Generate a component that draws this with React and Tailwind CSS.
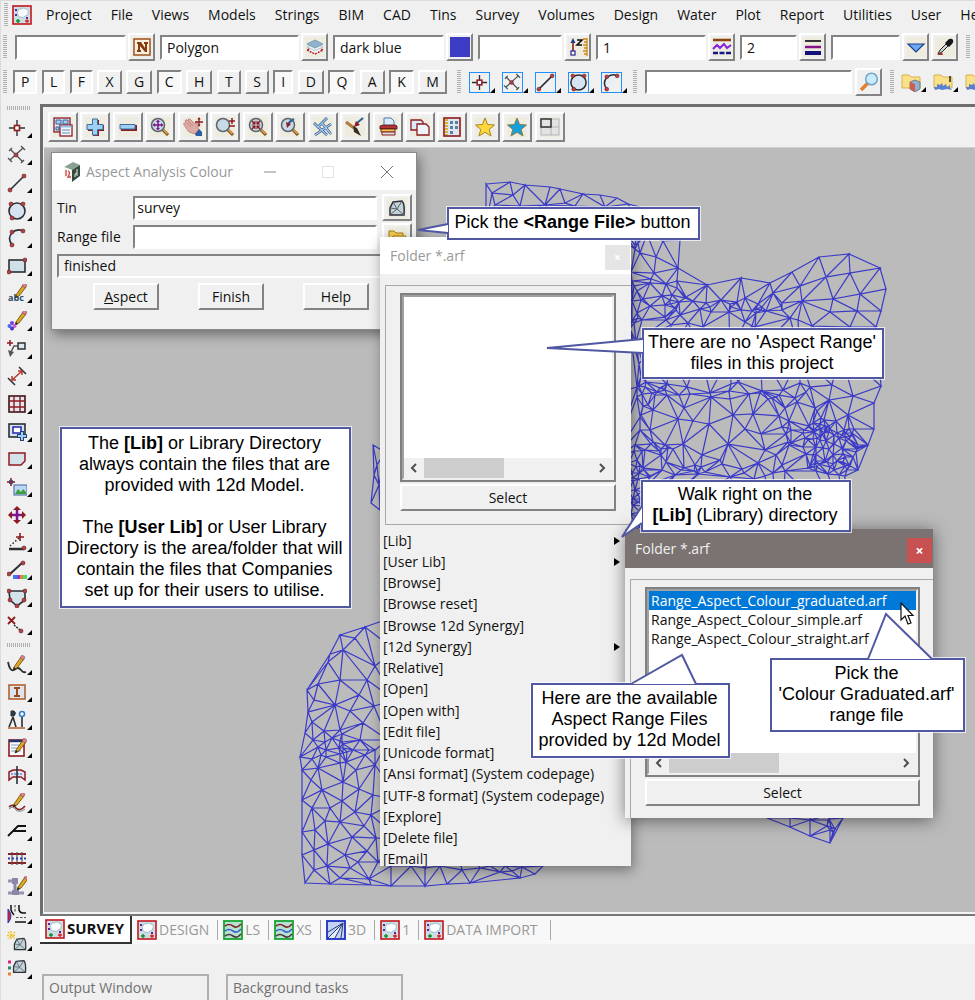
import { useMemo, useState } from 'react';
import clsx from 'clsx';

const RAISED = 'border-2 border-t-white border-l-white border-r-[#838383] border-b-[#838383] bg-[#f0f0f0]';
const SUNKEN = 'border-2 border-t-[#838383] border-l-[#838383] border-r-white border-b-white bg-white';

const MENUS = ['Project', 'File', 'Views', 'Models', 'Strings', 'BIM', 'CAD', 'Tins', 'Survey', 'Volumes', 'Design', 'Water', 'Plot', 'Report', 'Utilities', 'User', 'Help'];

// All icons are drawn on a 20x20 grid
const RED = '#8e1b1f';
const INK = '#2b2f36';

const pencil = (
  <>
    <path d="M7 12 L14 2 L17 4 L10 13 L6 15 Z" fill="#e0a81c" stroke="#5c4410" strokeWidth=".8" />
    <path d="M13 3 L15 0 L18 2 L16.500 5 Z" fill="#d9808a" stroke="#8a4a50" strokeWidth=".6" />
    <path d="M6 15 L7 12 L9 14 Z" fill="#222" />
  </>
);
const lens = (
  <>
    <path d="M12 12 L18 18" stroke="#7a4a12" strokeWidth="3" />
    <path d="M12.500 12 L17.500 17" stroke="#e7a44b" strokeWidth="1.500" />
    <circle cx="8" cy="8" r="6.500" fill="#c7dbe6" stroke="#5b656d" strokeWidth="1.500" />
  </>
);
const tinShape = (
  <>
    <path d="M6 4 L15 3 Q18 6 17 17 L3 17 L3 10 Z" fill="#c3d3da" stroke={INK} strokeWidth="1.500" />
    <path d="M6 4 L10 11 L3 17 M15 3 L10 11 L17 17 M3 10 L10 11" stroke="#58636a" fill="none" />
  </>
);
const folder = <path d="M1 3 H8 L10 5 H19 V16 H1 Z" fill="#fbe08a" stroke="#d9b24a" />;
const planTile = (
  <>
    <rect x="1" y="1" width="18" height="18" fill="#c9dfe4" stroke="#c4161c" strokeWidth="1.600" />
    <path d="M6 6 Q6 3 9 4 Q12 2 14 4 Q18 5 16 8 Q16 11 13 11 Q11 14 9 12 Q5 12 6 9 Q4 7 6 6" fill="#fbfdfe" stroke="#8fb2c0" strokeWidth=".8" />
    <path d="M3 4 h2 v2 h-2 z M3 9 h2 v2 h-2 z M14 12 h2 v2 h-2 z" fill="#6a1f9a" />
    <path d="M6 14 v4 M4 16 h4" stroke="#138a2e" strokeWidth="1.400" />
    <path d="M15 14.500 v3.500 M13 16 h4" stroke="#e01c24" strokeWidth="1.400" />
  </>
);
const waveTile = (
  <>
    <rect x="1" y="1" width="18" height="18" fill="#b9e0d4" stroke="#17a52e" strokeWidth="1.800" />
    <path d="M2 6 Q6 3 10 6 T18 4" stroke="#7d2b2b" strokeWidth="1.600" fill="none" />
    <path d="M2 11 Q6 8 10 11 T18 9" stroke="#3c63c9" strokeWidth="1.600" fill="none" />
    <path d="M2 16 Q6 13 10 16 T18 14" stroke="#4c3a3a" strokeWidth="1.600" fill="none" />
  </>
);
const dot = (x, y) => <circle cx={x} cy={y} r="2" fill="#b04348" stroke="#6e1a1e" strokeWidth=".6" />;

const ICONS = {
  plan: planTile,
  section: waveTile,
  perspective: (
    <>
      <rect x="1" y="1" width="18" height="18" fill="#c5d2f7" stroke="#1d2fc0" strokeWidth="1.800" />
      <path d="M2 18 L17 3 L8 18 Z" fill="#e6eefb" />
      <path d="M2 18 L17 3 M9 18 L17 3 M15 18 L17 3 M2 12 L17 3" stroke="#26406b" fill="none" />
    </>
  ),
  name: (
    <>
      <rect x="2" y="2" width="16" height="16" fill="#f8efe0" stroke="#a0501c" strokeWidth="1.500" />
      <path d="M5 5 h4 l4 6 V7 h-1 V5 h4 v2 h-1 v8 h-2 L8 9 v4 h1 v2 H5 v-2 h1 V7 H5 Z" fill="#8a3a0c" />
    </>
  ),
  layers: (
    <>
      <path d="M2 13 L10 17 L18 13 L10 9 Z" fill="#fff" stroke="#b0202a" strokeDasharray="2 1" strokeWidth="1.500" />
      <path d="M2 10 L10 14 L18 10 L10 6 Z" fill="#e4edf2" stroke="#b9c6cf" />
      <path d="M2 7 L10 11 L18 7 L10 3 Z" fill="#8fb3cf" stroke="#6f91aa" strokeWidth=".8" />
    </>
  ),
  swatch: <rect width="20" height="20" fill="#3b3bc4" />,
  height: (
    <>
      <path d="M5 3 V14" stroke="#8e1b1f" strokeWidth="1.600" />
      <path d="M2.500 6 L5 1 L7.500 6 Z" fill="#253a8e" />
      <rect x="3" y="14" width="4" height="4" fill="#fff" stroke="#22229a" strokeWidth="1.200" />
      <path d="M9 3 h5 l-5 5 h5" stroke="#111" strokeWidth="1.600" fill="none" />
      <path d="M19 1 V19 M15 2 h4 M16 5 h3 M15 8 h4 M16 11 h3 M15 14 h4 M16 17 h3" stroke="#d08a1c" strokeWidth="1.300" />
    </>
  ),
  linestyle: (
    <>
      <path d="M1 3 H19" stroke="#8a4312" strokeWidth="2.500" />
      <path d="M1 12 L5 8 L8 11 L12 7 L15 11 L19 8" stroke="#8424e0" strokeWidth="2" fill="none" />
      <path d="M1 16 H19" stroke="#15158c" strokeWidth="2.500" strokeDasharray="5 1.500" />
    </>
  ),
  weight: (
    <>
      <path d="M2 4 H18" stroke="#333" strokeWidth="2" />
      <path d="M2 10 H18" stroke="#86128a" strokeWidth="2.500" />
      <path d="M2 16 H18" stroke="#12127f" strokeWidth="4" />
    </>
  ),
  drop: <path d="M2 7 H18 L10 15 Z" fill="#69aaf0" stroke="#1d3f8f" strokeWidth="1.200" />,
  dropper: (
    <>
      <path d="M3 17 L5 13 L11 7 L13 9 L7 15 Z" fill="#cfd5da" stroke="#222" />
      <path d="M10 6 L14 2 Q17 1 18 3 Q19 5 17 7 L14 10 Z" fill="#16181f" />
      <path d="M2 18 L7 15 L8 18 Z" fill="#a83338" />
    </>
  ),
  snapPoint: (
    <>
      <path d="M10 2 V18 M2 10 H18" stroke={INK} strokeWidth="1.400" />
      <rect x="7.500" y="7.500" width="5" height="5" fill="#fff" stroke={RED} strokeWidth="1.600" />
    </>
  ),
  snapCross: (
    <>
      <path d="M3 4 L16 17 M16 3 L3 15 M14 1 l4 4 M1 13 l4 4 M2 6 l3 -3 M14 18 l3 -3" stroke="#4a4e55" strokeWidth="1.300" fill="none" />
      {dot(9, 10)}
    </>
  ),
  snapLine: (
    <>
      <path d="M3 17 L17 3" stroke={INK} strokeWidth="1.600" />
      {dot(3, 17)}
      {dot(17, 3)}
    </>
  ),
  snapCircle: (
    <>
      <circle cx="10" cy="10" r="8" fill="#d5e3f2" stroke={INK} strokeWidth="1.600" />
      {dot(4, 3)}
      {dot(16, 3)}
      {dot(5, 17)}
    </>
  ),
  snapArc: (
    <>
      <path d="M5 17 Q0 10 5 5 Q10 0 16 3" stroke={INK} strokeWidth="1.600" fill="#e6eff5" />
      {dot(5, 17)}
      {dot(5, 4)}
      {dot(16, 3)}
    </>
  ),
  rect: (
    <>
      <rect x="2" y="4" width="16" height="12" fill="#cfe0e6" stroke={INK} strokeWidth="1.600" />
      {dot(2, 16)}
      {dot(18, 4)}
    </>
  ),
  text: (
    <>
      <g transform="translate(2 -1)">{pencil}</g>
      <text x="1" y="17" fontSize="9" fontWeight="700" fill="#2c4a68" fontFamily="Open Sans, sans-serif">abc</text>
    </>
  ),
  symbol: (
    <>
      <g transform="translate(2 -1)">{pencil}</g>
      <circle cx="5" cy="12" r="2" fill="#7c3ae0" />
      <circle cx="2.500" cy="15" r="2" fill="#3f6cf0" />
      <circle cx="7.500" cy="15" r="2" fill="#ca5ad0" />
      <circle cx="5" cy="17.500" r="2" fill="#4339c8" />
    </>
  ),
  leader: (
    <>
      <path d="M3 1 v6 M0 4 h6" stroke={RED} strokeWidth="1.500" />
      <rect x="11" y="4" width="7" height="6" fill="#dbe8ee" stroke={INK} strokeWidth="1.500" />
      <path d="M11 7 H7 L4 13" stroke="#555" strokeWidth="1.500" fill="none" />
      <path d="M1 11 L7 13 L3 18 Z" fill="#555" />
    </>
  ),
  dimension: (
    <>
      <path d="M1 12 L8 19 M12 1 L19 8" stroke={INK} strokeWidth="1.500" />
      <path d="M5 14 L15 5 M5 10 v4 h4 M11 5 h4 v4" stroke="#b43a32" strokeWidth="1.500" fill="none" />
    </>
  ),
  table: (
    <>
      <rect x="2" y="2" width="16" height="16" fill="#e2e9ee" stroke="#3c1418" strokeWidth="1.600" />
      <path d="M7 2 V18 M13 2 V18 M2 7 H18 M2 13 H18" stroke={RED} strokeWidth="1.400" />
    </>
  ),
  insert: (
    <>
      <rect x="2" y="2" width="16" height="13" fill="#d4e2ea" stroke={INK} strokeWidth="1.600" />
      <rect x="6" y="5" width="8" height="6" fill="#fff" stroke="#2424b4" strokeWidth="1.500" />
      <path d="M15 9 v10 M10 14 h10" stroke="#27427a" strokeWidth="4" />
      <path d="M15 10 v8 M11 14 h8" stroke="#9fd0f0" strokeWidth="2" />
    </>
  ),
  polygon: <path d="M2 4 H18 V12 L14 16 H2 Z" fill="#d4e2ea" stroke={RED} strokeWidth="1.500" />,
  image: (
    <>
      <path d="M4 1 v8 M0 5 h8" stroke={RED} strokeWidth="1.500" />
      <circle cx="4" cy="5" r="2" fill="none" stroke="#27427a" />
      <rect x="7" y="8" width="13" height="10" fill="#b8d8f4" stroke="#5d79a8" strokeWidth="1.200" />
      <path d="M8 17 L11 12 L14 15 L16 12 L19 15 V17 Z" fill="#3c9e3c" />
    </>
  ),
  move: (
    <>
      <path d="M10 3 V17 M3 10 H17" stroke="#7d168a" strokeWidth="2.500" />
      <path d="M6 5 L10 1 L14 5 Z M6 15 L10 19 L14 15 Z M5 6 L1 10 L5 14 Z M15 6 L19 10 L15 14 Z" fill={RED} />
    </>
  ),
  extend: (
    <>
      <path d="M2 17 H17" stroke={INK} strokeWidth="2.500" />
      <path d="M3 14 L12 6" stroke={INK} strokeDasharray="1.500 2" strokeWidth="1.500" />
      <path d="M13 1 v8 M9 5 h8" stroke={RED} strokeWidth="1.600" />
      {dot(17, 16)}
    </>
  ),
  colourLine: (
    <>
      <path d="M3 14 L15 3" stroke={INK} strokeWidth="2" />
      {dot(16, 3)}
      {dot(2, 14)}
      <path d="M6 17 h4" stroke="#3b76f0" strokeWidth="4" />
      <path d="M10 17 h3" stroke="#8b3bd0" strokeWidth="4" />
      <path d="M13 17 h3" stroke="#f08030" strokeWidth="4" />
      <path d="M16 17 h4" stroke="#40e070" strokeWidth="4" />
    </>
  ),
  shield: (
    <>
      <path d="M2 3 H18 V12 L10 18 L3 12 Z" fill="#d4e2ea" stroke={INK} strokeWidth="1.600" />
      {dot(2, 3)}
      {dot(18, 3)}
      {dot(10, 18)}
      {dot(3, 12)}
      {dot(17, 12)}
    </>
  ),
  remove: (
    <>
      <path d="M1 2 L8 9 M8 2 L1 9" stroke={RED} strokeWidth="1.800" />
      <path d="M7 10 L13 15" stroke={INK} strokeWidth="1.500" strokeDasharray="2 1" />
      {dot(14, 16)}
    </>
  ),
  sketch: (
    <>
      <path d="M1 7 Q3 17 7 15 Q11 11 14 15 Q16 18 19 17" stroke={INK} strokeWidth="1.800" fill="none" />
      {pencil}
    </>
  ),
  ibeam: (
    <>
      <rect x="2" y="3" width="16" height="14" fill="#d9e6ef" stroke="#b5602c" strokeWidth="1.600" />
      <path d="M7 5 h6 v2 h-2 v6 h2 v2 H7 v-2 h2 V7 H7 Z" fill="#a0481c" />
    </>
  ),
  survey: (
    <>
      <path d="M4 1 h3 q3 2 0 5 H4 Z" fill="#2c3c50" stroke={INK} />
      <path d="M6 7 L2 17 M6 7 L9 17 M15 7 V17" stroke={INK} strokeWidth="1.600" />
      <circle cx="15" cy="4" r="2.500" fill="#fff" stroke="#2f82c8" strokeWidth="1.600" />
      <path d="M1 18 H18" stroke="#b5602c" strokeWidth="1.500" />
    </>
  ),
  notes: (
    <>
      <rect x="2" y="2" width="15" height="16" fill="#fff" stroke={RED} strokeWidth="1.600" />
      <path d="M2 3 H17" stroke="#24366e" strokeWidth="2.500" />
      <path d="M4 7 h10 M4 10 h10 M4 13 h10" stroke="#7b9ad0" />
      <g transform="translate(2 0)">{pencil}</g>
    </>
  ),
  xsection: (
    <>
      <path d="M2 7 L6 5 H14 L18 7 V15 L14 12 H6 L2 15 Z" fill="#dfe7f3" stroke={RED} strokeWidth="1.500" />
      <path d="M4 9 H16" stroke="#3c5bb4" fill="none" strokeDasharray="2 1" />
      <path d="M10 1 V19" stroke={INK} strokeWidth="1.600" />
    </>
  ),
  redraw: (
    <>
      <path d="M2 14 Q6 10 9 15 Q13 19 18 13" stroke={RED} strokeWidth="1.600" fill="none" />
      <path d="M2 16 Q6 12 9 17 Q13 20 18 16" stroke="#6d8a94" fill="none" />
      <g transform="translate(0 -1)">{pencil}</g>
    </>
  ),
  slope: <path d="M1 15 L11 5 H19 M6 10 H19" stroke="#111" strokeWidth="1.800" fill="none" />,
  rail: (
    <>
      <path d="M1 6 H19 M1 15 H19" stroke={RED} strokeWidth="1.800" />
      <path d="M5 4 V17 M10 4 V17 M15 4 V17" stroke="#555" strokeWidth="1.200" />
      <path d="M1 10.500 H19" stroke="#2d3cb4" strokeWidth="1.800" strokeDasharray="2 2" />
    </>
  ),
  column: (
    <>
      <path d="M1 5 h10 M1 17 h16" stroke="#9694b2" strokeWidth="3" />
      <path d="M5 2 h6 v6 h-6 z M5 14 h7 v5 h-7 z" fill="#8a88a8" />
      <path d="M8 6 V16" stroke="#8a88a8" strokeWidth="3" />
      <g transform="translate(4 -1)">{pencil}</g>
    </>
  ),
  junction: (
    <>
      <path d="M1 5 Q7 12 1 19 Z" fill="#e01c24" stroke="#2d3cb4" />
      <path d="M4 1 V6 Q5 9 7 11 M12 1 V6 Q13 9 16 9 H19 M8 18 H19" stroke="#111" strokeWidth="1.500" fill="none" />
      <path d="M8 1 V8 M9 13.500 H19" stroke="#555" strokeWidth="1.200" strokeDasharray="2.500 1.500" />
    </>
  ),
  newTin: (
    <>
      <path d="M4 0 v9 M0 4.500 h9 M1 1 l7 7 M8 1 l-7 7" stroke="#f0c020" strokeWidth="1.300" strokeDasharray="2 1" />
      <g transform="translate(5 5) scale(.8)">{tinShape}</g>
    </>
  ),
  colourTin: (
    <>
      <path d="M1 3 h3" stroke="#e02080" strokeWidth="3" />
      <path d="M1 9 h3" stroke="#208a70" strokeWidth="3" />
      <path d="M1 15 h3" stroke="#f08030" strokeWidth="3" />
      <g transform="translate(4 -1) scale(.85)">{tinShape}</g>
    </>
  ),
  tin: tinShape,
  windows: (
    <>
      <rect x="1" y="1" width="16" height="14" fill="#d8e9f5" stroke={RED} strokeWidth="1.300" />
      <path d="M3 3 h5 v4 h-5 z M10 3 h5 v4 h-5 z M3 10 h3 v3 h-3 z" fill="#a9cbea" stroke="#3a64a0" />
      <rect x="7" y="8" width="12" height="11" fill="#f4f8fb" stroke={RED} strokeWidth="1.300" />
      <path d="M9 13 h8 M9 16 h8" stroke="#5b8cc0" />
      <path d="M7.500 9.500 h11" stroke="#8ec3ee" strokeWidth="2" />
    </>
  ),
  plus: (
    <>
      <path d="M8 3 h6 v5 h5 v6 h-5 v5 h-6 v-5 h-5 v-6 h5 z" fill={RED} />
      <path d="M7.500 2 h5 v5.500 h5.500 v5 h-5.500 v5.500 h-5 v-5.500 h-5.500 v-5 h5.500 z" fill="#9fd0f5" stroke="#3d6f9e" />
    </>
  ),
  minus: (
    <>
      <path d="M3 8 h16 v6 h-16 z" fill={RED} />
      <path d="M2 7.500 h15 v4.500 h-15 z" fill="#9fd0f5" stroke="#3d6f9e" />
    </>
  ),
  zoomFit: (
    <>
      {lens}
      <path d="M8 4 V12 M4 8 H12" stroke="#7d168a" strokeWidth="1.500" />
      <path d="M6 5 L8 2.500 L10 5 Z M6 11 L8 13.500 L10 11 Z M5 6 L2.500 8 L5 10 Z M11 6 L13.500 8 L11 10 Z" fill="#7d168a" />
    </>
  ),
  pan: (
    <>
      <path d="M1 8 Q0 6 2 6 L3 6 Q1 3 3 3 Q4 2 5 4 Q5 1 7 2 L12 7 L13 5 Q15 5 14 8 L16 13 L12 17 L6 15 Z" fill="#dfa9a6" stroke="#b8807c" strokeWidth=".8" />
      <path d="M4 6 L8 10 M5 4 L10 9" stroke="#b8807c" strokeWidth=".8" />
      <path d="M12 17 L16 12 L19 15 V19 H13 Z" fill="#2b5c9c" />
      <path d="M16 1 V9 M12 5 H20" stroke={RED} strokeWidth="1.300" />
      <path d="M14.500 2.500 L16 0 L17.500 2.500 Z M14.500 7.500 L16 10 L17.500 7.500 Z" fill={RED} />
    </>
  ),
  zoomInOut: (
    <>
      {lens}
      <path d="M17 1 v6 M14 4 h6 M14 9 h6" stroke={RED} strokeWidth="1.500" />
    </>
  ),
  zoomShrink: (
    <>
      {lens}
      <path d="M4 4 l3 3 M12 4 l-3 3 M4 12 l3 -3 M12 12 l-3 -3" stroke={RED} strokeWidth="1.500" />
      <path d="M7.500 3.500 v4 h-4 z M8.500 3.500 v4 h4 z M7.500 12.500 v-4 h-4 z M8.500 12.500 v-4 h4 z" fill={RED} />
    </>
  ),
  zoomBack: (
    <>
      {lens}
      <path d="M8 9 Q8 5 14 2" stroke="#2f5f96" strokeWidth="2" fill="none" />
      <path d="M6 5 L11 7 L7 11 Z" fill={RED} />
    </>
  ),
  ticks: (
    <>
      <path d="M1 6 L5 10 L14 1 M9 6 L18 17 M2 18 L18 7 M3 8 L14 18" stroke="#27427a" strokeWidth="2.500" fill="none" />
      <path d="M1 6 L5 10 L14 1 M9 6 L18 17 M2 18 L18 7 M3 8 L14 18" stroke="#9fd0f0" strokeWidth="1.400" fill="none" />
    </>
  ),
  brush: (
    <>
      <path d="M1 5 L9 11" stroke="#b07c3c" strokeWidth="3" />
      <path d="M8 9 L12 11 L16 19 L9 15 Z" fill="#332c24" />
      <path d="M18 1 L12 6" stroke="#2b5c9c" strokeWidth="2" />
      <path d="M9 10 L11 4 L15 8 Z" fill={RED} />
    </>
  ),
  print: (
    <>
      <path d="M6 1 h7 l3 3 v6 H6 Z" fill="#dcebf8" stroke="#4a79b8" />
      <path d="M2 9 L5 8 H17 L19 9 V12 H2 Z" fill="#b03438" stroke="#4c0f12" strokeWidth=".8" />
      <path d="M3 12 h14 v3 h-14 z" fill="#f0cc4c" stroke="#4c0f12" strokeWidth=".8" />
      <path d="M4 15 h13 v3 h-13 z" fill="#d4e0e8" stroke={RED} />
    </>
  ),
  copy: (
    <>
      <path d="M1 3 h10 l2 2 v8 h-12 z" fill="#dcebf8" stroke={RED} strokeWidth="1.300" />
      <path d="M7 7 h9 l3 3 v8 h-12 z" fill="#edf5fb" stroke={RED} strokeWidth="1.300" />
    </>
  ),
  building: (
    <>
      <rect x="2" y="1" width="16" height="18" fill="#dce7f0" stroke={RED} strokeWidth="1.600" />
      <path d="M4.500 2 V18" stroke="#d8b038" strokeWidth="3" strokeDasharray="2 1" />
      <path d="M8 4 h3 v3 h-3 z M13 4 h3 v3 h-3 z M8 9 h3 v3 h-3 z M13 9 h3 v3 h-3 z M8 14 h3 v3 h-3 z" fill="#5c7f9e" />
    </>
  ),
  star: <path d="M10 1 L12.600 7.500 L19.500 8 L14.200 12.400 L16 19 L10 15.300 L4 19 L5.800 12.400 L.5 8 L7.400 7.500 Z" fill="#ffd93c" stroke="#a8842c" />,
  blueStar: <path d="M10 1 L12.600 7.500 L19.500 8 L14.200 12.400 L16 19 L10 15.300 L4 19 L5.800 12.400 L.5 8 L7.400 7.500 Z" fill="#14a0e0" stroke="#8a7c40" />,
  panes: (
    <>
      <rect x="1" y="2" width="18" height="16" fill="#e3e3e3" stroke="#b5b5b5" />
      <path d="M11 2 V18 M1 10 H19" stroke="#b5b5b5" />
      <rect x="1" y="2" width="10" height="8" fill="#e3e3e3" stroke="#333" strokeWidth="1.500" />
    </>
  ),
  search: (
    <>
      <path d="M2 18 L9 11" stroke="#e08030" strokeWidth="3.500" />
      <circle cx="12.500" cy="7" r="5.800" fill="#c9ecfb" stroke="#6fa6c8" strokeWidth="1.500" />
    </>
  ),
  folderCube: (
    <>
      {folder}
      <path d="M9 10 L14 8 L19 10 V17 L14 20 L9 17 Z" fill="#8fb3cf" stroke="#666" strokeWidth=".8" />
      <path d="M9 10 L14 12 V20 L9 17 Z" fill="#cf5c50" />
    </>
  ),
  folderGear: (
    <>
      {folder}
      <path d="M2 18 L1 15 L4 15 L4 12 L7 13 L9 11 L10 14 L13 12 L14 15 L17 13 L17 16 L19 18 L14 17 L9 18 L6 17 Z" fill="#5a7fd0" />
      <path d="M17 4 v6" stroke="#222" strokeWidth="1.500" />
    </>
  ),
  openFolder: (
    <>
      <path d="M2 17 V4 H7 L9 6 H16 V9" fill="#f3cd52" stroke="#a87c14" />
      <path d="M2 17 L6 9 H19 L16 17 Z" fill="#fce58c" stroke="#a87c14" />
    </>
  ),
  cube: (
    <>
      <path d="M2 5 L11 0 L18 3 L10 8 Z" fill="#88a391" />
      <path d="M2 5 L10 8 V20 L2 15 Z" fill="#f7f5f2" />
      <path d="M10 8 L18 3 V14 L10 20 Z" fill="#35483d" />
      <path d="M4 8 v6 M6 9 q3 1 0 6 h3" stroke="#c44" strokeWidth="1.300" fill="none" />
      <path d="M15 7 v7 M15 11 q-3 0 -2 4" stroke="#e8eee9" fill="none" />
    </>
  ),
};

const TOP_RAIL = ['snapPoint', 'snapCross', 'snapLine', 'snapCircle', 'snapArc', 'rect', 'text', 'symbol', 'leader', 'dimension', 'table', 'insert', 'polygon', 'image', 'move', 'extend', 'colourLine', 'shield', 'remove'];
const BOTTOM_RAIL = ['sketch', 'ibeam', 'survey', 'notes', 'xsection', 'redraw', 'slope', 'rail', 'column', 'junction', 'newTin', 'colourTin'];
const VIEW_TOOLS = ['windows', 'plus', 'minus', 'zoomFit', 'pan', 'zoomInOut', 'zoomShrink', 'zoomBack', 'ticks', 'brush', 'print', 'copy', 'building', 'star', 'blueStar', 'panes'];
const SNAPS = ['snapPoint', 'snapCross', 'snapLine', 'snapCircle', 'snapArc'];

const FIELDS = [
  { label: 'Name', value: '', width: 'w-[111px]', icons: ['name'] },
  { label: 'Model', value: 'Polygon', width: 'w-[139px]', icons: ['layers'] },
  { label: 'Colour', value: 'dark blue', width: 'w-[111px]', icons: ['swatch'] },
  { label: 'Height', value: '', width: 'w-[84px]', icons: ['height'] },
  { label: 'Linestyle', value: '1', width: 'w-[110px]', icons: ['linestyle'] },
  { label: 'Weight', value: '2', width: 'w-[57px]', icons: ['weight'] },
  { label: 'Tinable', value: '', width: 'w-[69px]', icons: ['drop', 'dropper'] },
];

const TABS = [
  { name: 'DESIGN', icon: 'plan' },
  { name: 'LS', icon: 'section' },
  { name: 'XS', icon: 'section' },
  { name: '3D', icon: 'perspective' },
  { name: '1', icon: 'plan' },
  { name: 'DATA IMPORT', icon: 'plan' },
];

const FOLDER_ITEMS = [
  { text: '[Lib]', sub: true },
  { text: '[User Lib]', sub: true },
  { text: '[Browse]' },
  { text: '[Browse reset]' },
  { text: '[Browse 12d Synergy]' },
  { text: '[12d Synergy]', sub: true },
  { text: '[Relative]' },
  { text: '[Open]' },
  { text: '[Open with]' },
  { text: '[Edit file]' },
  { text: '[Unicode format]' },
  { text: '[Ansi format] (System codepage)' },
  { text: '[UTF-8 format] (System codepage)' },
  { text: '[Explore]' },
  { text: '[Delete file]' },
  { text: '[Email]' },
];

const RANGE_FILES = ['Range_Aspect_Colour_graduated.arf', 'Range_Aspect_Colour_simple.arf', 'Range_Aspect_Colour_straight.arf'];

// Survey tin: boundary first, then the surveyed points inside it
const BOUNDARY = [
  [486, 184], [510, 182], [525, 185], [550, 187], [560, 189], [583, 194], [600, 195], [617, 198], [628, 204], [640, 207],
  [680, 240], [678, 268], [707, 285], [741, 278], [770, 283], [792, 272], [819, 257], [849, 254], [880, 268], [886, 289],
  [881, 311], [876, 327], [881, 386], [874, 403], [874, 429], [868, 445], [858, 470], [845, 476], [845, 532], [880, 620],
  [875, 720], [843, 818], [830, 843], [810, 836], [790, 827], [767, 818], [740, 800], [620, 780], [543, 866], [535, 874],
  [520, 878], [470, 883], [447, 884], [425, 886], [391, 886], [371, 885], [330, 884], [305, 883], [302, 855], [302, 832],
  [302, 800], [302, 770], [300, 757], [305, 733], [308, 712], [307, 690], [330, 654], [340, 635], [365, 627], [385, 620],
  [450, 560], [380, 510], [371, 503], [374, 475], [373, 445], [385, 452], [486, 225],
];
const POINTS = [
  [492, 193], [513, 195], [495, 205], [520, 206], [545, 205], [575, 206], [565, 203], [605, 207],
  [663, 241], [638, 243], [656, 257], [640, 253], [654, 273], [677, 281], [634, 286], [637, 291], [662, 296], [650, 306],
  [665, 305], [680, 315], [671, 325], [688, 323], [693, 301], [721, 300], [736, 303], [706, 303], [711, 312], [729, 312],
  [745, 298], [755, 327], [766, 311], [782, 303], [800, 286], [802, 301], [812, 326], [798, 320], [826, 277], [830, 312],
  [833, 299], [850, 273], [860, 294], [857, 311], [850, 327], [773, 293], [703, 327], [637, 387], [648, 405], [667, 384],
  [687, 387], [684, 408], [678, 419], [693, 421], [709, 424], [711, 397], [729, 391], [730, 399], [733, 415], [728, 444],
  [745, 429], [753, 414], [761, 434], [768, 399], [776, 397], [785, 408], [788, 428], [800, 383], [806, 392], [829, 400],
  [815, 408], [832, 385], [853, 396], [848, 415], [854, 429], [683, 444], [702, 455], [720, 460], [694, 471], [742, 469],
  [765, 450], [765, 476], [782, 466], [776, 455], [789, 445], [785, 471], [662, 470], [650, 476], [635, 445], [637, 460],
  [650, 430], [675, 475], [640, 430], [700, 350], [730, 355], [760, 350], [800, 355], [840, 350], [670, 355],
  [355, 638], [343, 650], [328, 662], [375, 666], [367, 680], [318, 684], [359, 695], [314, 700], [350, 711], [374, 706],
  [312, 722], [340, 730], [342, 742], [363, 723], [360, 740], [324, 731], [321, 755], [318, 768], [340, 754], [340, 763],
  [343, 782], [356, 770], [359, 789], [375, 750], [373, 795], [342, 801], [325, 821], [364, 826], [352, 837], [328, 844],
  [345, 855], [367, 851], [327, 866], [350, 868], [369, 879], [375, 765], [391, 866], [411, 866], [440, 866], [462, 870],
  [480, 868], [490, 866], [500, 872], [810, 820], [828, 820], [790, 818], [400, 800], [450, 820], [395, 700], [395, 650],
  [377, 465], [379, 485], [388, 740], [830, 700], [780, 560], [700, 620], [400, 840], [520, 840],
  [311, 780], [322, 790], [312, 808], [330, 808], [355, 812], [315, 830], [340, 822], [314, 850], [376, 838], [358, 862],
  [314, 870], [340, 878], [378, 862], [425, 868], [371, 815], [505, 866], [512, 871], [522, 867], [340, 680], [335, 705],
];
// Dense pickups: centre x, centre y, radius x, radius y, count
const CLUSTERS = [
  [828, 448, 30, 30, 85],
  [638, 500, 14, 35, 34],
  [640, 300, 12, 80, 22],
  [650, 400, 20, 22, 16],
  [672, 302, 18, 20, 12],
  [745, 315, 60, 14, 18],
  [745, 392, 75, 14, 14],
  [338, 750, 34, 16, 18],
  [650, 460, 40, 18, 16],
  [740, 472, 70, 10, 14],
  [800, 425, 30, 25, 12],
  [833, 825, 6, 12, 8],
];

function inside([x, y]) {
  let hit = false;
  for (let i = 0, j = BOUNDARY.length - 1; i < BOUNDARY.length; j = i++) {
    const [xi, yi] = BOUNDARY[i];
    const [xj, yj] = BOUNDARY[j];
    if (yi > y !== yj > y && x < ((xj - xi) * (y - yi)) / (yj - yi) + xi) hit = !hit;
  }
  return hit;
}

function circumcircle(a, b, c) {
  const d = 2 * (a[0] * (b[1] - c[1]) + b[0] * (c[1] - a[1]) + c[0] * (a[1] - b[1]));
  if (Math.abs(d) < 1e-9) return { x: 0, y: 0, r: Infinity };
  const a2 = a[0] ** 2 + a[1] ** 2;
  const b2 = b[0] ** 2 + b[1] ** 2;
  const c2 = c[0] ** 2 + c[1] ** 2;
  const x = (a2 * (b[1] - c[1]) + b2 * (c[1] - a[1]) + c2 * (a[1] - b[1])) / d;
  const y = (a2 * (c[0] - b[0]) + b2 * (a[0] - c[0]) + c2 * (b[0] - a[0])) / d;
  return { x, y, r: (a[0] - x) ** 2 + (a[1] - y) ** 2 };
}

// Bowyer-Watson triangulation, returned as one svg path
function buildTin() {
  let seed = 7;
  const random = () => {
    seed = (seed * 16807) % 2147483647;
    return seed / 2147483647;
  };
  const pts = [...BOUNDARY, ...POINTS];
  CLUSTERS.forEach(([cx, cy, rx, ry, count]) => {
    for (let i = 0; i < count; i++) {
      const angle = random() * Math.PI * 2;
      const dist = Math.sqrt(random());
      const p = [cx + Math.cos(angle) * dist * rx, cy + Math.sin(angle) * dist * ry];
      if (inside(p)) pts.push(p);
    }
  });
  // tiny shift keeps points off shared circles
  const all = pts.map(([x, y]) => [x + random() * 0.01, y + random() * 0.01]);
  const n = all.length;
  all.push([-9000, -9000], [9000, -9000], [500, 12000]);
  const make = (a, b, c) => ({ v: [a, b, c], circle: circumcircle(all[a], all[b], all[c]) });
  let tris = [make(n, n + 1, n + 2)];

  for (let i = 0; i < n; i++) {
    const edges = new Map();
    const keep = [];
    tris.forEach((t) => {
      const { x, y, r } = t.circle;
      if ((all[i][0] - x) ** 2 + (all[i][1] - y) ** 2 >= r) {
        keep.push(t);
        return;
      }
      [[0, 1], [1, 2], [2, 0]].forEach(([p, q]) => {
        const a = Math.min(t.v[p], t.v[q]);
        const b = Math.max(t.v[p], t.v[q]);
        const key = `${a}-${b}`;
        if (edges.has(key)) edges.delete(key);
        else edges.set(key, [a, b]);
      });
    });
    edges.forEach(([a, b]) => keep.push(make(a, b, i)));
    tris = keep;
  }

  return tris
    .filter(({ v }) => v.every((k) => k < n))
    .filter(({ v }) => inside([(all[v[0]][0] + all[v[1]][0] + all[v[2]][0]) / 3, (all[v[0]][1] + all[v[1]][1] + all[v[2]][1]) / 3]))
    .map(({ v }) => `M${v.map((k) => `${Math.round(all[k][0])} ${Math.round(all[k][1])}`).join('L')}Z`)
    .join('');
}

function Icon({ name, className = 'w-5 h-5' }) {
  return (
    <svg viewBox="0 0 20 20" fill="none" className={clsx('shrink-0', className)} aria-hidden="true">
      {ICONS[name]}
    </svg>
  );
}

function Grip({ flat }) {
  return flat ? (
    <div className="mx-1.5 h-1 bg-[repeating-linear-gradient(90deg,#b0b0b0_0_1px,#f0f0f0_1px_2px)]" />
  ) : (
    <div className="w-1 h-6 shrink-0 bg-[repeating-linear-gradient(180deg,#b0b0b0_0_1px,#f0f0f0_1px_2px)]" />
  );
}

function IconButton({ name, label, className = 'w-[27px] h-7', tint = 'bg-[#eeebdf]' }) {
  return (
    <button aria-label={label || name} className={clsx('shrink-0 flex items-center justify-center', RAISED, className)}>
      <span className={tint}>
        <Icon name={name} />
      </span>
    </button>
  );
}

function Corner() {
  return (
    <svg viewBox="0 0 5 5" className="w-[5px] h-[5px] shrink-0" aria-hidden="true">
      <path d="M5 0 V5 H0 Z" fill="#000" />
    </svg>
  );
}

function RailButton({ name }) {
  return (
    <button aria-label={name} className="flex items-center pl-1.5">
      <Icon name={name} />
      <span className="self-end pb-1">
        <Corner />
      </span>
    </button>
  );
}

function PushButton({ children, className }) {
  return (
    <button className={clsx('flex items-center justify-center leading-5 text-[#111]', RAISED, className)}>
      {children}
    </button>
  );
}

function ScrollStrip({ thumb }) {
  return (
    <div className="flex items-center h-5 bg-[#f0f0f0] text-[#505050]">
      <svg viewBox="0 0 20 20" className="w-5 h-5"><path d="M12 6 L8 10 L12 14" fill="none" stroke="currentColor" strokeWidth="2" /></svg>
      <div className={clsx('h-full bg-[#cdcdcd]', thumb)} />
      <svg viewBox="0 0 20 20" className="w-5 h-5 ml-auto"><path d="M8 6 L12 10 L8 14" fill="none" stroke="currentColor" strokeWidth="2" /></svg>
    </div>
  );
}

function FileBox({ files, thumb, className }) {
  const [picked, setPicked] = useState(0);
  return (
    <div className={clsx('border-2 border-t-[#808080] border-l-[#808080] border-r-[#808080] border-b-[#808080]', className)}>
      <div className="h-full flex flex-col bg-white border-2 border-t-[#a0a0a0] border-l-[#a0a0a0] border-r-[#f0f0f0] border-b-[#f0f0f0]">
        <ul role="listbox" aria-label="Files" className="flex-1">
          {files.map((file, i) => (
            <li
              key={file}
              role="option"
              aria-selected={i === picked}
              onClick={() => setPicked(i)}
              className={clsx('px-0.5 leading-[19px]', i === picked ? 'bg-[#0078d7] text-white' : 'text-[#111]')}
            >
              {file}
            </li>
          ))}
        </ul>
        <ScrollStrip thumb={thumb} />
      </div>
    </div>
  );
}

// Note box with an optional pointer; tail is [start, tip, end] measured from the box corner
function Callout({ className, tail, children }) {
  return (
    <div className={clsx('absolute flex items-center justify-center border-2 border-[#5058a2] bg-white outline outline-1 outline-white/70 pr-0.5 pb-0.5 text-center text-black text-[18px] leading-[21px] font-[Liberation_Sans,Arial,sans-serif]', className)}>
      {tail && (
        <svg className="absolute -left-0.5 -top-0.5 w-px h-px overflow-visible" aria-hidden="true">
          <path d={`M${tail.map((p) => p.join(' ')).join('L')}`} fill="#fff" stroke="#5058a2" strokeWidth="2" />
        </svg>
      )}
      <p className="relative whitespace-nowrap">{children}</p>
    </div>
  );
}

function AspectDialog() {
  return (
    <section className="absolute left-[7px] top-1 w-[366px] h-[178px] flex flex-col bg-[#f0f0f0] border border-[#8a8a8a] shadow-[2px_4px_12px_rgba(0,0,0,0.45)]">
      <header className="flex items-center h-[37px] bg-white pl-2.5 text-[#999]">
        <Icon name="cube" />
        <h2 className="ml-1">Aspect Analysis Colour</h2>
        <svg viewBox="0 0 132 14" className="ml-auto mr-[21px] w-[132px] h-[14px]" fill="none" aria-hidden="true">
          <path d="M1 7 H13" stroke="#888" />
          <rect x="59.500" y="1.500" width="11" height="11" stroke="#e2e2e2" />
          <path d="M118 1 L130 13 M130 1 L118 13" stroke="#777" />
        </svg>
      </header>
      <div className="flex flex-col pl-[5px] pr-1">
        <div className="flex items-center h-[29px] mt-[3px]">
          <label htmlFor="tin" className="w-[77px] leading-6 text-[#111]">Tin</label>
          <input id="tin" defaultValue="survey" className={clsx('w-[246px] h-6 px-0.5 text-[#111] outline-none', SUNKEN)} />
          <IconButton name="tin" label="Pick tin" className="ml-[5px] w-[30px] h-[27px]" />
        </div>
        <div className="flex items-center h-[29px]">
          <label htmlFor="range" className="w-[77px] leading-6 text-[#111]">Range file</label>
          <input id="range" className={clsx('w-[246px] h-6 px-0.5 outline-none', SUNKEN)} />
          <IconButton name="openFolder" label="Pick range file" className="ml-[5px] w-[30px] h-[27px]" />
        </div>
        <output className="block h-6 mt-[3px] border-2 border-t-[#838383] border-l-[#838383] border-r-white border-b-white pl-[5px] leading-5 text-[#111]">finished</output>
      </div>
      <div className="flex gap-[39px] pl-[41px] mt-[5px]">
        <PushButton className="w-[66px] h-[27px]"><span className="underline">A</span>spect</PushButton>
        <PushButton className="w-[66px] h-[27px]">Finish</PushButton>
        <PushButton className="w-[66px] h-[27px]">Help</PushButton>
      </div>
    </section>
  );
}

function FolderDialog() {
  return (
    <section className="absolute left-[336px] top-[89px] w-[251px] h-[629px] overflow-hidden bg-[#f0f0f0] shadow-[2px_4px_12px_rgba(0,0,0,0.4)]">
      <header className="flex items-center justify-between h-[37px] bg-white pl-2.5 text-[#999]">
        <h2>Folder *.arf</h2>
        <button aria-label="Close folder" className="w-[25px] h-[25px] mr-px mt-1 bg-[#e5e5e5] text-white text-xs font-bold">×</button>
      </header>
      <div className="ml-[5px] mt-[11px] h-[240px] border border-r-0 border-[#a8a8a8] pl-3.5 pt-[7px]">
        <FileBox files={[]} thumb="w-20" className="w-[216px] h-[189px]" />
        <PushButton className="w-[216px] h-[27px] mt-0.5">Select</PushButton>
      </div>
      <ul className="grid auto-rows-fr h-[340px] mt-[5px]">
        {FOLDER_ITEMS.map((item) => (
          <li key={item.text} className="flex">
            <button className="flex-1 flex items-center justify-between pl-[3px] pr-[11px] leading-5 text-left text-[#111]">
              {item.text}
              {item.sub && (
                <svg viewBox="0 0 6 8" className="w-1.5 h-2"><path d="M0 0 L6 4 L0 8 Z" fill="#000" /></svg>
              )}
            </button>
          </li>
        ))}
      </ul>
    </section>
  );
}

function LibraryDialog() {
  return (
    <section className="absolute left-[581px] top-[381px] w-[308px] h-[289px] flex flex-col bg-[#f0f0f0] shadow-[0_2px_16px_rgba(0,0,0,0.5)]">
      <header className="flex items-center justify-between h-[39px] bg-[#7a7372] pl-2.5 text-[#f0f0f0]">
        <h2>Folder *.arf</h2>
        <button aria-label="Close library" className="w-[25px] h-[25px] mr-px mt-1 bg-[#c75050] text-white text-sm leading-5 font-bold">×</button>
      </header>
      <div className="flex-1 ml-[5px] mt-[11px] border-t border-l border-[#a8a8a8] pl-3.5 pt-[7px]">
        <FileBox files={RANGE_FILES} thumb="w-[110px]" className="w-[275px] h-[190px]" />
        <PushButton className="w-[275px] h-[27px] mt-0.5">Select</PushButton>
      </div>
    </section>
  );
}

function Canvas() {
  const tin = useMemo(buildTin, []);
  return (
    <div className="relative flex-1 overflow-hidden bg-[#bbb]">
      <svg viewBox="44 148 931 766" className="absolute left-0 top-0 w-[931px] h-[766px]" aria-label="Survey tin">
        <path d={tin} fill="none" stroke="#3b3bc8" strokeWidth="1.200" />
      </svg>

      <AspectDialog />
      <FolderDialog />
      <LibraryDialog />

      <Callout className="left-[403px] top-[59px] w-[253px] h-[33px]" tail={[[1, 17], [-29, 23], [1, 26]]}>
        Pick the <b>&lt;Range File&gt;</b> button
      </Callout>
      <Callout className="left-[598px] top-[180px] w-[242px] h-[51px]" tail={[[1, 11], [-95, 20], [1, 25]]}>
        There are no 'Aspect Range'<br />files in this project
      </Callout>
      <Callout className="left-[597px] top-[332px] w-[210px] h-[52px]" tail={[[1, 26], [-19, 57], [1, 43]]}>
        Walk right on the<br /><b>[Lib]</b> (Library) directory
      </Callout>
      <Callout className="left-[16px] top-[279px] w-[291px] h-[181px]">
        The <b>[Lib]</b> or Library Directory<br />always contain the files that are<br />provided with 12d Model.<br /><br />
        The <b>[User Lib]</b> or User Library<br />Directory is the area/folder that will<br />contain the files that Companies<br />set up for their users to utilise.
      </Callout>
      <Callout className="left-[487px] top-[535px] w-[199px] h-[75px]" tail={[[100, 1], [151, -28], [165, 1]]}>
        Here are the available<br />Aspect Range Files<br />provided by 12d Model
      </Callout>
      <Callout className="left-[726px] top-[510px] w-[195px] h-[74px]" tail={[[98, 1], [116, -44], [162, 1]]}>
        Pick the<br />'Colour Graduated.arf'<br />range file
      </Callout>

      <svg viewBox="0 0 16 24" className="absolute left-[856px] top-[454px] w-4 h-6" aria-hidden="true">
        <path d="M1 1 V18 L5 14 L8 22 L11 21 L8 13.500 H13 Z" fill="#fff" stroke="#111" strokeWidth="1.200" />
      </svg>
    </div>
  );
}

export default function App() {
  const [pressed, setPressed] = useState(['P', 'L', 'F', 'C', 'I', 'Q', 'K']);

  const toggle = (letter) => {
    setPressed(pressed.includes(letter) ? pressed.filter((l) => l !== letter) : [...pressed, letter]);
  };

  return (
    <div className="h-screen flex flex-col overflow-hidden bg-[#f0f0f0] border-t border-l border-[#dcdcdc] text-sm text-[#111] font-[Open_Sans,sans-serif]">
      <nav className="flex items-center h-7 pl-[3px] whitespace-nowrap">
        <Grip />
        <Icon name="plan" className="w-5 h-5 ml-1 mr-3.5" />
        <div className="flex gap-[19px]">
          {MENUS.map((menu) => (
            <button key={menu} className="leading-5">{menu}</button>
          ))}
        </div>
      </nav>

      <div className="flex items-center h-9 pl-0.5">
        <Grip />
        <div className="flex gap-[5px] ml-2">
          {FIELDS.map((field) => (
            <div key={field.label} className="flex items-center gap-0.5 shrink-0">
              <input aria-label={field.label} defaultValue={field.value} className={clsx('h-[25px] px-[5px] outline-none', SUNKEN, field.width)} />
              {field.icons.map((icon) => (
                <IconButton key={icon} name={icon} />
              ))}
            </div>
          ))}
        </div>
        <div className="ml-2">
          <Grip />
        </div>
      </div>

      <div className="flex items-center h-[34px] pl-0.5">
        <Grip />
        <div className="flex shrink-0 ml-1.5 w-[434px] justify-between">
          {'PLFXGCHTSIDQAKM'.split('').map((letter) => (
            <button
              key={letter}
              aria-pressed={pressed.includes(letter)}
              onClick={() => toggle(letter)}
              className={clsx('h-6 px-1.5 leading-5', pressed.includes(letter) ? 'border-2 border-t-[#838383] border-l-[#838383] border-r-white border-b-white bg-[#f8f8f8]' : RAISED)}
            >
              {letter}
            </button>
          ))}
        </div>
        <div className="flex items-center ml-2.5 shrink-0">
          <Grip />
          <div className="flex gap-[7px] ml-2">
            {SNAPS.map((snap) => (
              <button key={snap} aria-label={snap} className="flex items-end">
                <span className="border border-[#1e90ff]">
                  <Icon name={snap} className="w-[19px] h-[19px]" />
                </span>
                <Corner />
              </button>
            ))}
          </div>
        </div>
        <div className="flex items-center ml-1.5 shrink-0">
          <Grip />
          <input aria-label="Search" className={clsx('ml-2 w-[207px] h-6 px-[5px] outline-none', SUNKEN)} />
          <IconButton name="search" className="ml-[3px] w-[27px] h-7" tint="" />
        </div>
        <div className="flex items-center gap-[7px] ml-2 shrink-0">
          <Grip />
          {['folderCube', 'folderGear', 'folderGear'].map((icon, i) => (
            <button key={i} aria-label={`Project folder ${i + 1}`} className="flex items-end">
              <Icon name={icon} className="w-5 h-5" />
              <Corner />
            </button>
          ))}
        </div>
      </div>

      <div className="flex flex-1 min-h-0 pt-[5px]">
        <aside className="w-[39px] shrink-0 flex flex-col pt-0.5">
          <div className="w-9">
            <Grip flat />
          </div>
          <div className="grid auto-rows-fr h-[525px] mt-1 shrink-0">
            {TOP_RAIL.map((name) => (
              <RailButton key={name} name={name} />
            ))}
          </div>
          <div className="w-9 mt-1">
            <Grip flat />
          </div>
          <div className="grid auto-rows-fr h-[332px] mt-1 shrink-0">
            {BOTTOM_RAIL.map((name) => (
              <RailButton key={name} name={name} />
            ))}
          </div>
        </aside>

        <main className="flex-1 min-w-0 flex flex-col">
          <div className="flex-1 min-h-0 flex flex-col border-l-[3px] border-t-[3px] border-[#6e6e6e]">
            <div className="flex-1 min-h-0 flex flex-col border-l border-b-2 border-[#f4f4f4]">
              <div className="flex items-center h-[41px] pl-1 bg-[#f0f0f0] border-b border-[#d0d0d0]">
                <div className="flex justify-between w-[517px]">
                  {VIEW_TOOLS.map((tool) => (
                    <IconButton key={tool} name={tool} className="w-[30px] h-[30px]" />
                  ))}
                </div>
              </div>
              <Canvas />
            </div>
          </div>

          <div className="flex h-[30px] bg-[#f8f8f8] border-t-2 border-[#777]">
            <button className="flex items-center gap-0.5 w-[92px] h-7 pl-[5px] bg-white border-r-2 border-b-2 border-[#333] text-[15px] font-bold">
              <Icon name="plan" />
              SURVEY
            </button>
            {TABS.map((tab) => (
              <button key={tab.name} className="flex items-center gap-0.5 pl-[5px] text-[#999]">
                <Icon name={tab.icon} />
                {tab.name}
                <span className={clsx('w-px h-5 bg-[#aaa]', tab.name === 'DATA IMPORT' ? 'ml-2.5' : 'ml-1.5')} />
              </button>
            ))}
          </div>

          <footer className="flex gap-[17px] h-14 pt-[30px] pl-0.5">
            <div className="w-[167px] border-2 border-b-0 border-[#b0b0b0] pl-[5px] pt-0.5 leading-5 text-[#707070]">Output Window</div>
            <div className="w-[177px] border-2 border-b-0 border-[#b0b0b0] pl-[5px] pt-0.5 leading-5 text-[#707070]">Background tasks</div>
          </footer>
        </main>
      </div>
    </div>
  );
}
